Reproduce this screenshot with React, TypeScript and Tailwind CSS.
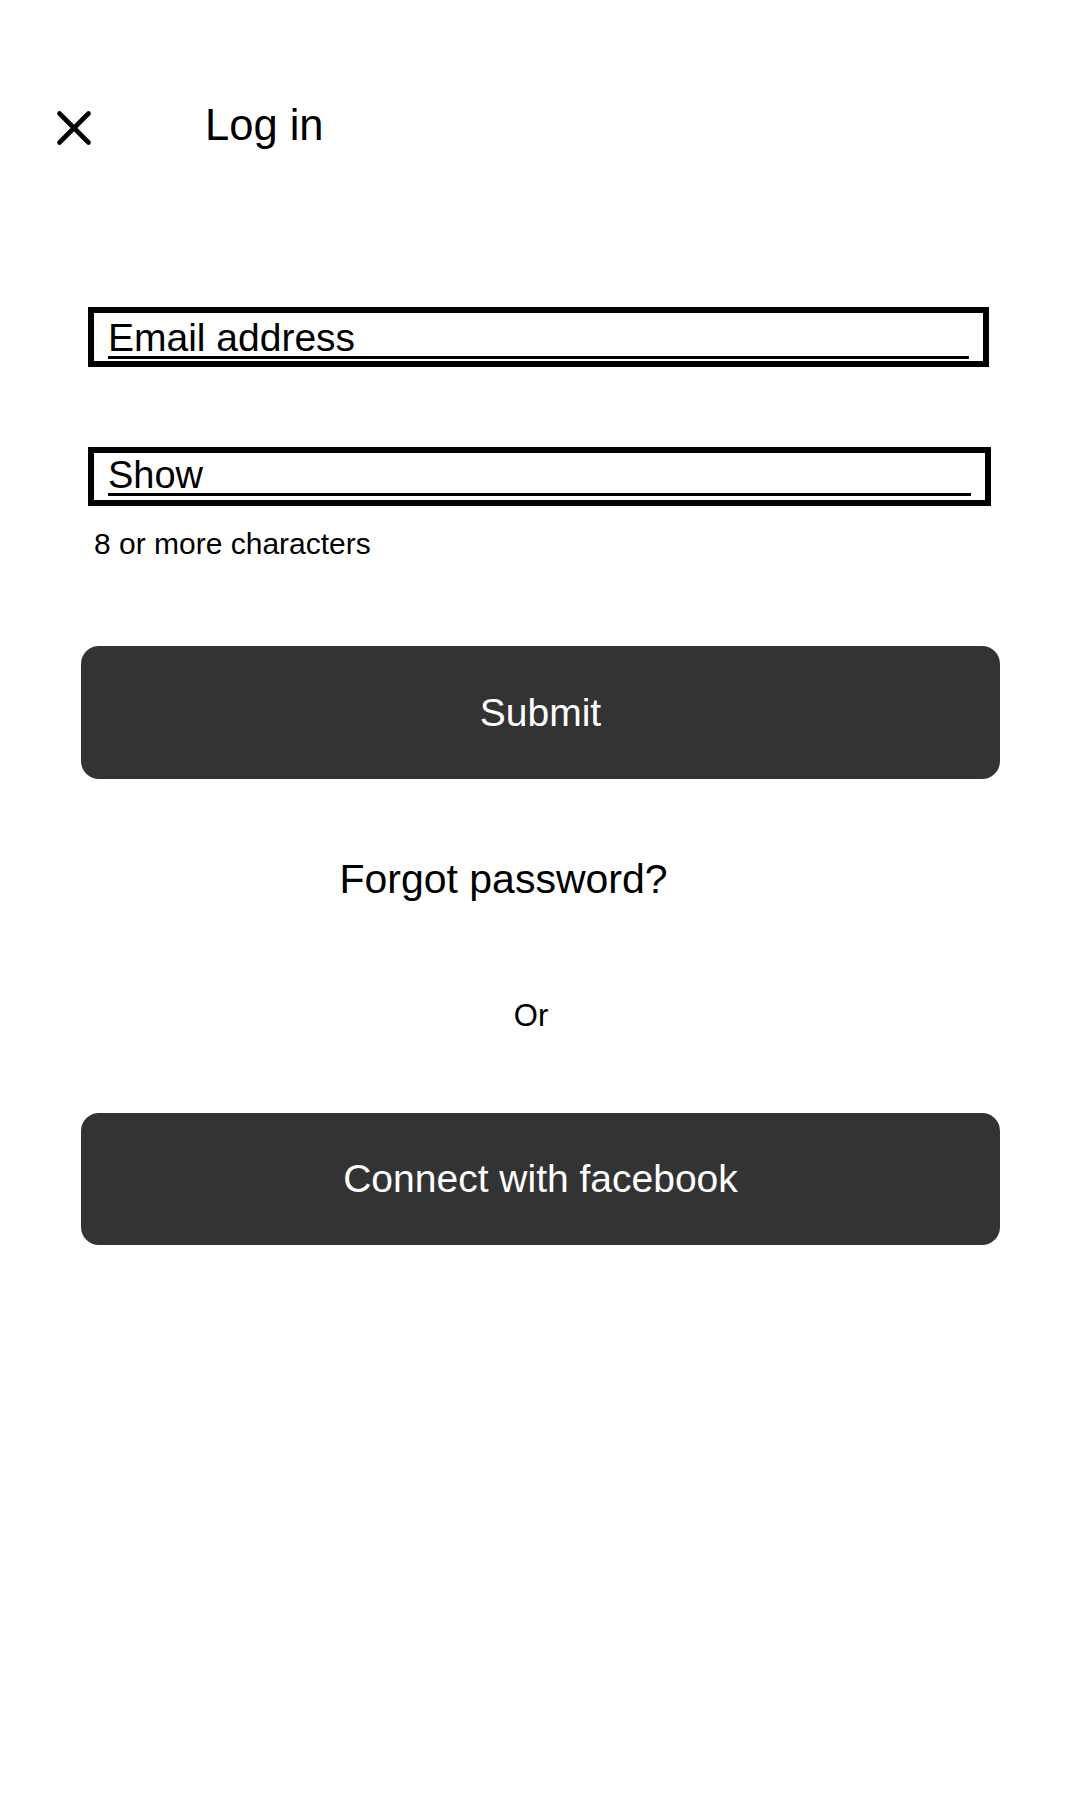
import React from "react";

function CloseIcon() {
  return (
    <svg width="36" height="36" viewBox="0 0 36 36" fill="none" aria-hidden="true">
      <line x1="3.5" y1="3.5" x2="32.5" y2="32.5" stroke="#000" strokeWidth="4.6" strokeLinecap="round" />
      <line x1="32.5" y1="3.5" x2="3.5" y2="32.5" stroke="#000" strokeWidth="4.6" strokeLinecap="round" />
    </svg>
  );
}

export default function App() {
  return (
    <div
      className="w-[1080px] min-h-[1800px] bg-white text-black"
      style={{ fontFamily: '"Liberation Sans", Arial, sans-serif' }}
    >
      {/* Header */}
      <div className="flex items-start pt-[100px] pl-[56px]">
        <button className="mt-[10px] w-[36px] h-[36px] flex items-center justify-center">
          <CloseIcon />
        </button>
        <h1 className="ml-[113px] text-[43.5px] leading-[50px] font-normal">Log in</h1>
      </div>

      {/* Form */}
      <div className="flex flex-col">
        <div className="ml-[88px] mt-[157px] w-[901px] border-[6px] border-black px-[14px] pt-[7px] pb-[2px]">
          <div className="text-[39px] leading-[36px] border-b-[3px] border-black">Email address</div>
        </div>

        <div className="ml-[88px] mt-[80px] w-[903px] border-[6px] border-black px-[14px] pt-[4px] pb-[4px]">
          <div className="text-[38px] leading-[36px] border-b-[3px] border-black">Show</div>
        </div>

        <div className="ml-[94px] mt-[21px] text-[30px] leading-[34px]">8 or more characters</div>

        <div className="ml-[81px] w-[919px] flex flex-col">
          <button className="mt-[85px] h-[133px] w-full rounded-[18px] bg-[#333333] text-white text-[39px] leading-[44px] flex items-center justify-center">
            Submit
          </button>

          <div className="mt-[76px] pr-[74px] text-center text-[41px] leading-[48px]">Forgot password?</div>

          <div className="mt-[95px] pr-[19px] text-center text-[31px] leading-[36px]">Or</div>

          <button className="mt-[79px] h-[132px] w-full rounded-[18px] bg-[#333333] text-white text-[39px] leading-[44px] flex items-center justify-center">
            Connect with facebook
          </button>
        </div>
      </div>
    </div>
  );
}
